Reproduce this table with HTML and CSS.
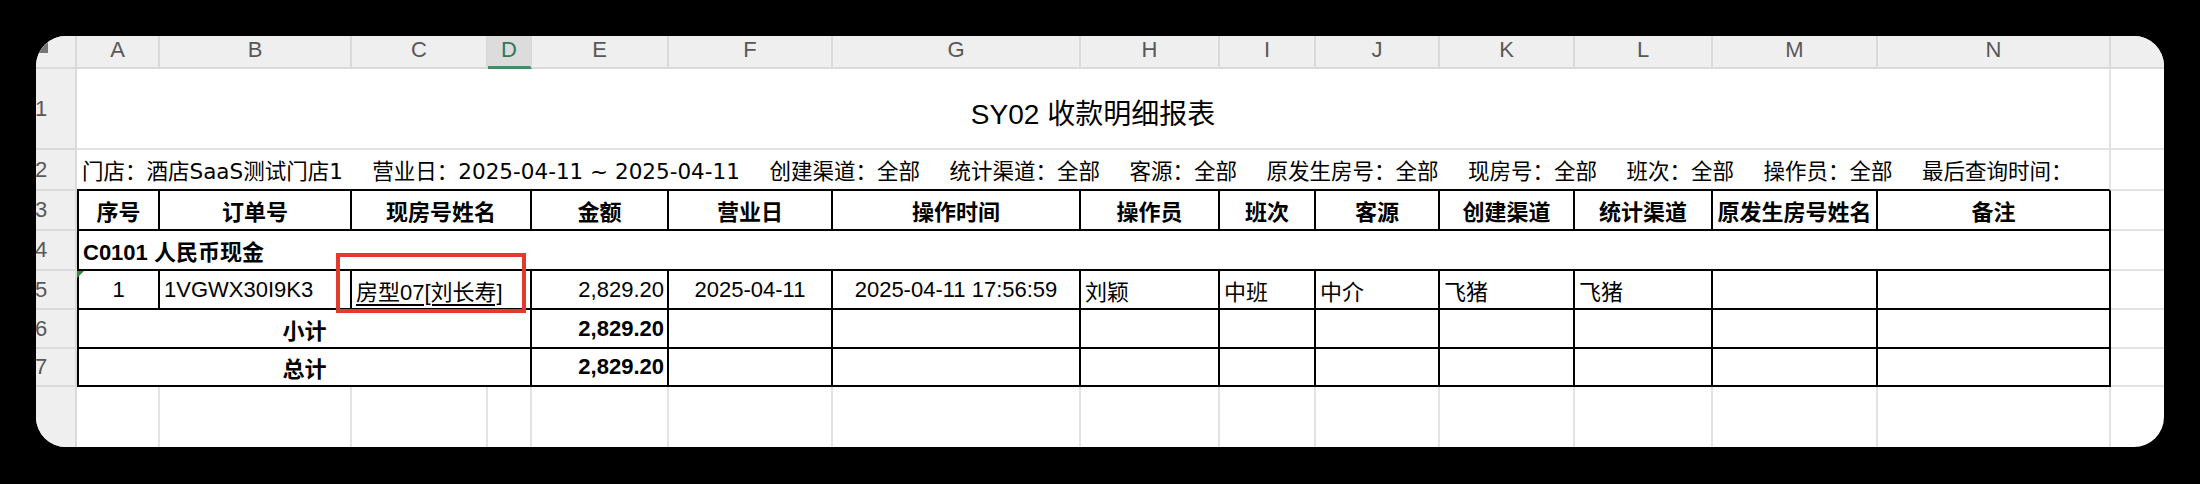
FILE: index.html
```html
<!DOCTYPE html>
<html lang="zh-CN">
<head>
<meta charset="utf-8">
<title>SY02 收款明细报表</title>
<link rel="stylesheet" href="styles.css">
</head>
<body>
<div class="card">
  <div class="sheet">
    <!-- column header row -->
    <div class="c corner"></div>
    <div class="c h">A</div>
    <div class="c h">B</div>
    <div class="c h">C</div>
    <div class="c h active">D</div>
    <div class="c h">E</div>
    <div class="c h">F</div>
    <div class="c h">G</div>
    <div class="c h">H</div>
    <div class="c h">I</div>
    <div class="c h">J</div>
    <div class="c h">K</div>
    <div class="c h">L</div>
    <div class="c h">M</div>
    <div class="c h">N</div>
    <div class="c h"></div>

    <!-- row 1 -->
    <div class="c rh">1</div>
    <div class="c span14 title">SY02 收款明细报表</div>
    <div class="c"></div>

    <!-- row 2 -->
    <div class="c rh">2</div>
    <div class="c span14 filters">
      <span>门店：酒店SaaS测试门店1</span>
      <span>营业日：2025-04-11 ~ 2025-04-11</span>
      <span>创建渠道：全部</span>
      <span>统计渠道：全部</span>
      <span>客源：全部</span>
      <span>原发生房号：全部</span>
      <span>现房号：全部</span>
      <span>班次：全部</span>
      <span>操作员：全部</span>
      <span>最后查询时间：</span>
    </div>
    <div class="c"></div>

    <!-- row 3 -->
    <div class="c rh">3</div>
    <div class="c t tl th">序号</div>
    <div class="c t th">订单号</div>
    <div class="c t th span2">现房号姓名</div>
    <div class="c t th">金额</div>
    <div class="c t th">营业日</div>
    <div class="c t th">操作时间</div>
    <div class="c t th">操作员</div>
    <div class="c t th">班次</div>
    <div class="c t th">客源</div>
    <div class="c t th">创建渠道</div>
    <div class="c t th">统计渠道</div>
    <div class="c t th">原发生房号姓名</div>
    <div class="c t th">备注</div>
    <div class="c"></div>

    <!-- row 4 -->
    <div class="c rh">4</div>
    <div class="c t tl span14 group">C0101 人民币现金</div>
    <div class="c"></div>

    <!-- row 5 -->
    <div class="c rh">5</div>
    <div class="c t tl center flag">1</div>
    <div class="c t">1VGWX30I9K3</div>
    <div class="c t span2 marked"><span class="link">房型07[刘长寿]</span></div>
    <div class="c t right">2,829.20</div>
    <div class="c t center">2025-04-11</div>
    <div class="c t center">2025-04-11 17:56:59</div>
    <div class="c t">刘颖</div>
    <div class="c t">中班</div>
    <div class="c t">中介</div>
    <div class="c t">飞猪</div>
    <div class="c t">飞猪</div>
    <div class="c t"></div>
    <div class="c t"></div>
    <div class="c"></div>

    <!-- row 6 -->
    <div class="c rh">6</div>
    <div class="c t tl span4 center bold">小计</div>
    <div class="c t right bold">2,829.20</div>
    <div class="c t"></div>
    <div class="c t"></div>
    <div class="c t"></div>
    <div class="c t"></div>
    <div class="c t"></div>
    <div class="c t"></div>
    <div class="c t"></div>
    <div class="c t"></div>
    <div class="c t"></div>
    <div class="c"></div>

    <!-- row 7 -->
    <div class="c rh">7</div>
    <div class="c t tl span4 center bold">总计</div>
    <div class="c t right bold">2,829.20</div>
    <div class="c t"></div>
    <div class="c t"></div>
    <div class="c t"></div>
    <div class="c t"></div>
    <div class="c t"></div>
    <div class="c t"></div>
    <div class="c t"></div>
    <div class="c t"></div>
    <div class="c t"></div>
    <div class="c"></div>

    <!-- row 8 -->
    <div class="c rh"></div>
    <div class="c"></div>
    <div class="c"></div>
    <div class="c"></div>
    <div class="c"></div>
    <div class="c"></div>
    <div class="c"></div>
    <div class="c"></div>
    <div class="c"></div>
    <div class="c"></div>
    <div class="c"></div>
    <div class="c"></div>
    <div class="c"></div>
    <div class="c"></div>
    <div class="c"></div>
    <div class="c"></div>
  </div>
</div>
</body>
</html>
```

FILE: styles.css
```css
html, body {
  margin: 0;
  padding: 0;
  background: #000;
}

body {
  width: 2200px;
  height: 484px;
  overflow: hidden;
}

.card {
  margin: 36px 0 0 36px;
  width: 2128px;
  height: 411px;
  border-radius: 30px;
  overflow: hidden;
  background: #fff;
}

.sheet {
  display: grid;
  grid-template-columns: 70px 83px 192px 136px 44px 137px 164px 248px 139px 96px 124px 135px 138px 165px 233px 120px;
  grid-template-rows: 33px 81px 41px 40px 40px 39px 39px 38px 80px;
  margin: 0 0 0 -29px;
  font-family: "Liberation Sans", "Noto Sans CJK SC", sans-serif;
  font-size: 22px;
  color: #000;
}

.c {
  box-sizing: border-box;
  border-right: 2px solid #e3e3e3;
  border-bottom: 2px solid #e3e3e3;
  display: flex;
  align-items: center;
  padding: 0 4px;
  white-space: nowrap;
  min-width: 0;
  position: relative;
}

/* headers */
.h, .corner, .rh {
  background: #efefef;
  border-right-color: #dadada;
  border-bottom-color: #dadada;
  color: #585858;
  justify-content: center;
}

.h {
  font-size: 22px;
  line-height: normal;
  align-items: flex-start;
  padding-top: 1px;
}

.h.active {
  background: #dcdcdc;
  color: #2f7a58;
  border-bottom: 3px solid #3f8e66;
}

.corner::after {
  content: "";
  position: absolute;
  right: 27px;
  bottom: 14px;
  border-style: solid;
  border-width: 0 0 14px 14px;
  border-color: transparent transparent #777 transparent;
}

.rh {
  font-size: 22px;
}

/* merged spans */
.span14 { grid-column: span 14; }
.span4 { grid-column: span 4; }
.span2 { grid-column: span 2; }

.title {
  justify-content: center;
  font-size: 28px;
  padding-top: 6px;
}

.filters {
  font-family: "DejaVu Sans", "Noto Sans CJK SC", sans-serif;
  font-size: 21.5px;
  gap: 29.5px;
  border-bottom-color: #000;
  padding-left: 5px;
}

/* table */
.t {
  border-right-color: #000;
  border-bottom-color: #000;
}

.tl {
  border-left: 2px solid #000;
}

.th {
  justify-content: center;
  font-weight: bold;
  padding: 0 2px;
}

.group {
  font-weight: bold;
}

.center { justify-content: center; }
.right { justify-content: flex-end; padding-right: 3px; }
.bold { font-weight: bold; }

.link {
  text-decoration: underline;
  text-decoration-thickness: 2px;
  text-underline-offset: 4px;
}

.flag::before {
  content: "";
  position: absolute;
  left: -2px;
  top: 0;
  border-style: solid;
  border-width: 7px 7px 0 0;
  border-color: #2f8a3c transparent transparent transparent;
}

.marked::after {
  content: "";
  position: absolute;
  left: -16px;
  top: -18px;
  right: 4px;
  bottom: -5px;
  border: 4px solid #e23a2e;
  pointer-events: none;
}
```
